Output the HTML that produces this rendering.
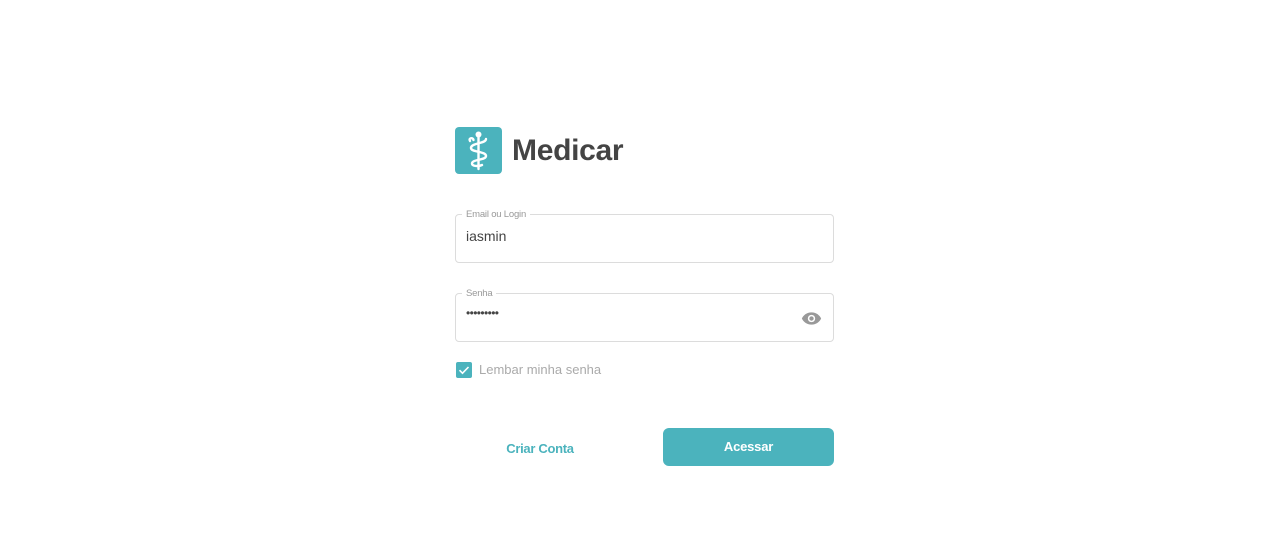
<!DOCTYPE html>
<html><head><meta charset="utf-8"><style>
body{margin:0;width:1280px;height:547px;background:#fff;font-family:"Liberation Sans",sans-serif;position:relative;overflow:hidden}
.abs{position:absolute}
.field{position:absolute;left:455px;width:377px;height:47px;border:1px solid #dcdcdc;border-radius:4px}
.lbl{position:absolute;left:6px;top:-6px;background:#fff;padding:0 4px;font-size:9.5px;color:#999;letter-spacing:-0.2px}
</style></head><body>
<div class="abs" style="left:455px;top:127px;width:47px;height:47px;background:#4bb3bd;border-radius:4px">
<svg width="47" height="47" viewBox="0 0 47 47" fill="none" stroke="#fff" stroke-width="2.4" stroke-linecap="round">
<circle cx="23.5" cy="7.5" r="3" fill="#fff" stroke="none"/>
<line x1="23.5" y1="9" x2="23.5" y2="42"/>
<path d="M15 14 C13 11 18 10 18.5 13 M31 12 C31 17 16 15.5 16 21 C16 25.5 31 24 31 29 C31 33.5 17 32 17 36.5 C17 39.5 24 39.5 27 38"/>
</svg></div>
<div class="abs" style="left:512px;top:134px;font-size:30px;font-weight:bold;color:#444;letter-spacing:-0.3px">Medicar</div>
<div class="field" style="top:214px"><span class="lbl">Email ou Login</span>
<span class="abs" style="left:10px;top:13px;font-size:14px;color:#444">iasmin</span></div>
<div class="field" style="top:293px"><span class="lbl">Senha</span>
<span class="abs" style="left:10px;top:12px;font-size:12px;color:#444;letter-spacing:-0.6px">•••••••••</span>
<svg class="abs" style="left:345px;top:17px" width="21" height="15" viewBox="0 0 24 16"><path d="M12 1C6.5 1 2.5 4.5 1 8c1.5 3.5 5.5 7 11 7s9.5-3.5 11-7C21.5 4.5 17.5 1 12 1z" fill="#999"/><circle cx="12" cy="8" r="4.2" fill="#fff"/><circle cx="12" cy="8" r="2.5" fill="#999"/></svg>
</div>
<div class="abs" style="left:456px;top:362px;width:16px;height:16px;background:#4bb3bd;border-radius:2px">
<svg width="16" height="16"><path d="M3.5 8.2l3 3 6-6.2" stroke="#fff" stroke-width="1.6" fill="none"/></svg></div>
<div class="abs" style="left:479px;top:362px;font-size:13px;color:#aaa">Lembar minha senha</div>
<div class="abs" style="left:490px;top:441px;width:100px;text-align:center;font-size:13px;font-weight:bold;color:#4bb3bd;letter-spacing:-0.3px">Criar Conta</div>
<div class="abs" style="left:663px;top:428px;width:171px;height:38px;background:#4bb3bd;border-radius:6px;color:#fff;font-size:13px;font-weight:bold;text-align:center;line-height:38px;letter-spacing:-0.2px">Acessar</div>
</body></html>
